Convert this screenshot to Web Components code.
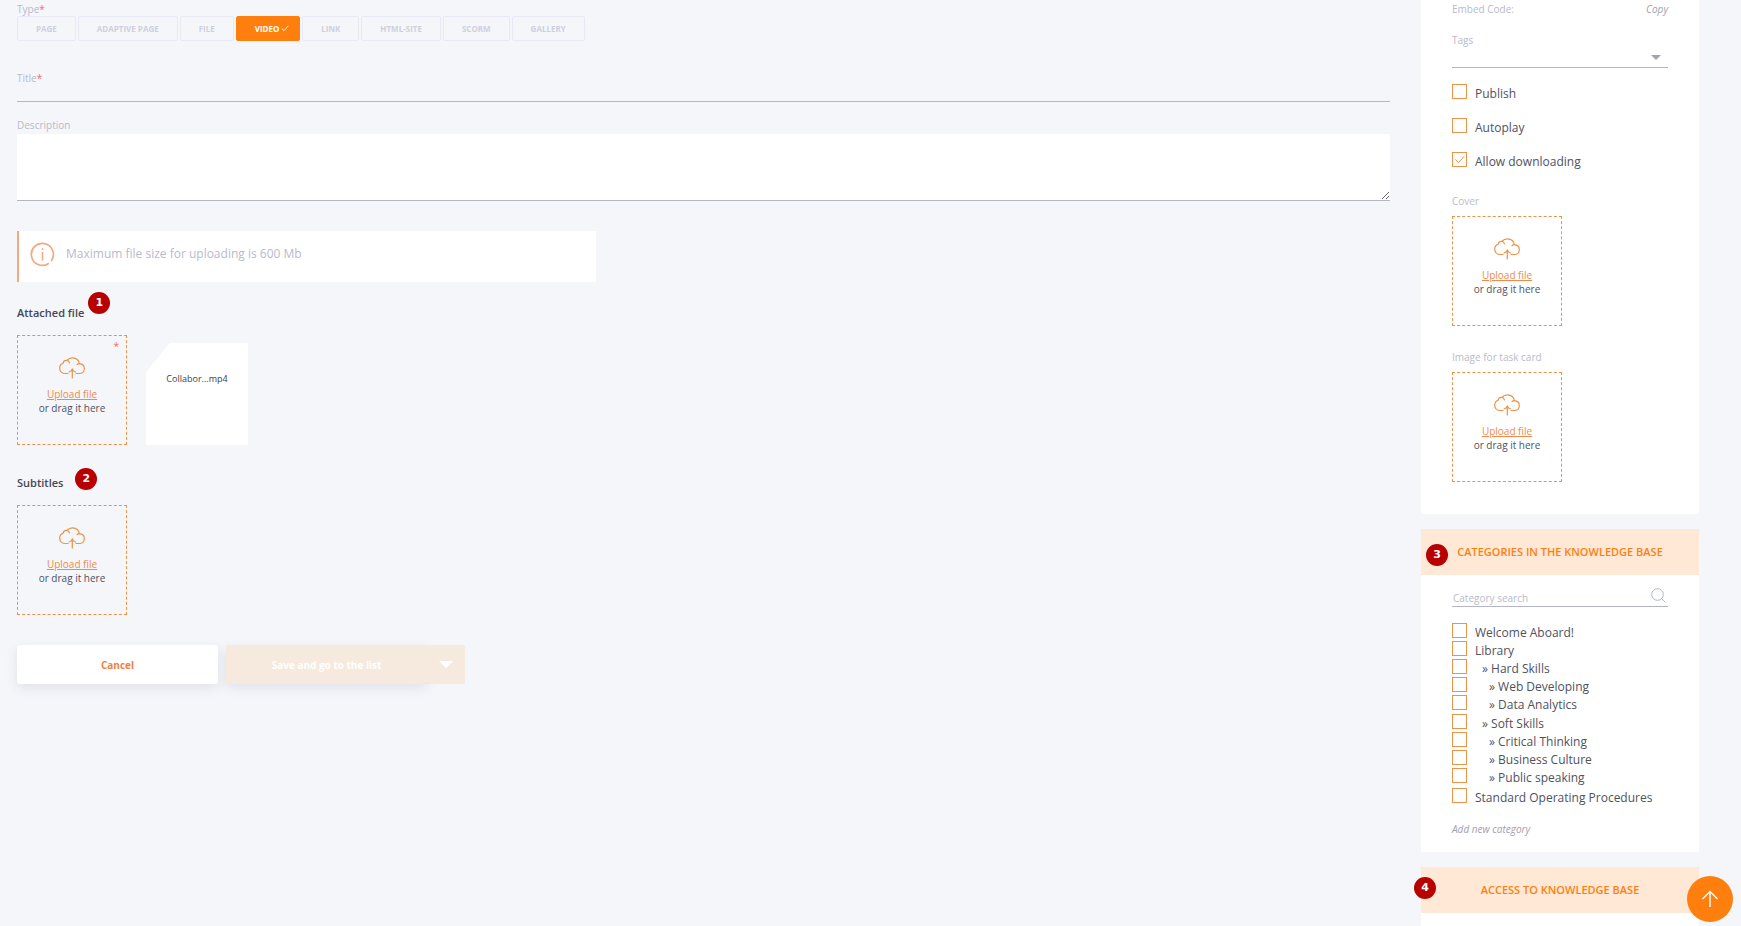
<!DOCTYPE html>
<html lang="en">
<head>
<meta charset="utf-8">
<meta name="viewport" content="width=device-width, initial-scale=1">
<title>Video material</title>
<style>
  :root {
    --bg: #f4f6fa;
    --panel: #fff;
    --accent: #ff7f0e;
    --accent-soft: #ffe8d6;
    --outline: #eb9348;
    --link: #f08a4b;
    --text: #50515e;
    --muted: #b9bacb;
    --line: #b4b6c4;
    --badge: #b80000;
  }
  body {
    margin: 0;
    background: var(--bg);
    color: var(--text);
    font-family: "Open Sans", "Noto Sans", sans-serif;
    font-size: 12px;
    line-height: 18px;
  }
</style>
</head>
<body>
<material-editor></material-editor>

<script>
const CLOUD = `
  <svg width="26" height="22" viewBox="0 0 26 22" fill="none" stroke="currentColor" stroke-width="1.2" stroke-linecap="round" stroke-linejoin="round" aria-hidden="true">
    <path d="M9 16.5H6.4C3.2 16.5.7 14.3.7 11.2.7 8.6 2.2 7 4.1 6.3 4.5 4.2 6.2 3.1 8 3.4 9.3 1.7 11.2.8 13.6.8c3.7 0 6.6 2.5 6.7 5.9 3 .2 5 2.4 5 5 0 2.9-2.2 4.8-5 4.8H17"/>
    <path d="M8 3.4c1.3.2 2.1 1.1 2.4 2.4M20.3 6.7c-.9 0-1.6.3-2.2.8"/>
    <path d="M13.3 21V11.8M10 15c1.7-.5 2.9-1.6 3.3-3.2.4 1.6 1.6 2.7 3.3 3.2"/>
  </svg>`;

function define(tag, html) {
  const template = document.createElement('template');
  template.innerHTML = html;
  customElements.define(tag, class extends HTMLElement {
    constructor() {
      super();
      this.attachShadow({ mode: 'open' }).append(template.content.cloneNode(true));
    }
    connectedCallback() {
      // every element marked data-attr shows the host attribute of that name
      this.shadowRoot.querySelectorAll('[data-attr]').forEach((el) => {
        el.textContent = this.getAttribute(el.dataset.attr) || '';
      });
      const box = this.shadowRoot.querySelector('input[type=checkbox]');
      if (box) box.checked = this.hasAttribute('checked');
    }
  });
}

define('num-badge', `
  <style>
    :host {
      display: flex;
      align-items: center;
      justify-content: center;
      width: 22px;
      height: 22px;
      border-radius: 50%;
      background: var(--badge);
      color: #fff;
      font: bold 11px/22px "DejaVu Sans", sans-serif;
    }
  </style>
  <slot></slot>
`);

define('field-label', `
  <style>
    :host { display: block; color: var(--muted); font-size: 10px; line-height: 14px; }
    i { display: none; color: #f26b6b; font-style: normal; }
    :host([required]) i { display: inline; }
  </style>
  <slot></slot><i>*</i>
`);

define('type-chip', `
  <style>
    :host { display: block; }
    button {
      display: flex;
      align-items: center;
      gap: 2px;
      height: 25px;
      padding: 0 18px;
      border: 1px solid #e8e9f4;
      border-radius: 2px;
      background: transparent;
      color: #cfd0dd;
      font: bold 8px/12px "Open Sans", sans-serif;
      text-transform: uppercase;
    }
    svg { display: none; }
    :host([selected]) button { padding-right: 10px; border-color: var(--accent); background: var(--accent); color: #fff; }
    :host([selected]) svg { display: block; }
  </style>
  <button type="button"><slot></slot>
    <svg width="8" height="7" viewBox="0 0 8 7" fill="none" stroke="#fff" aria-hidden="true"><path d="M.8 3.5 3 5.7 7.3.8"/></svg>
  </button>
`);

define('upload-box', `
  <style>
    :host { display: block; position: relative; width: 110px; }
    label {
      display: flex;
      flex-direction: column;
      align-items: center;
      box-sizing: border-box;
      height: 110px;
      padding-top: 21px;
      border: 1px dashed var(--outline);
      color: var(--text);
      font-size: 10px;
      line-height: 14px;
    }
    svg { margin-bottom: 8px; color: var(--outline); }
    u { color: var(--link); }
    input { position: absolute; width: 1px; height: 1px; opacity: 0; }
    i { display: none; position: absolute; top: 4px; right: 8px; color: #f26b6b; font-style: normal; font-size: 10px; line-height: 14px; }
    :host([required]) i { display: block; }
  </style>
  <label>${CLOUD}<u>Upload file</u><span>or drag it here</span><input type="file"></label>
  <i>*</i>
`);

define('file-card', `
  <style>
    :host {
      display: block;
      box-sizing: border-box;
      width: 102px;
      height: 102px;
      padding-top: 29px;
      background: #fff;
      clip-path: polygon(24px 0, 100% 0, 100% 100%, 0 100%, 0 29px);
      color: #3d3e49;
      font-size: 9px;
      line-height: 13px;
      text-align: center;
    }
  </style>
  <slot></slot>
`);

define('info-note', `
  <style>
    :host {
      display: flex;
      gap: 11px;
      box-sizing: border-box;
      max-width: 579px;
      height: 51px;
      padding: 11px 11px 0;
      border-left: 2px solid #f2a880;
      background: #fff;
      color: var(--muted);
      line-height: 24px;
    }
  </style>
  <svg width="25" height="25" viewBox="0 0 25 25" fill="none" stroke="#f2a880" aria-hidden="true">
    <path stroke-width="1.7" stroke-linecap="round" d="M18.2 21.7A11 11 0 1 1 21.5 18.5"/>
    <path stroke-width="1.5" d="M12.5 10v8.5M12.5 6.2v1.8"/>
  </svg>
  <slot></slot>
`);

define('check-row', `
  <style>
    :host { display: block; }
    label { display: flex; gap: 8px; line-height: 18px; }
    input {
      appearance: none;
      flex: none;
      width: 15px;
      height: 15px;
      margin: 0;
      border: 1px solid var(--outline);
      background: #fff;
    }
    input:checked {
      background: url("data:image/svg+xml,%3Csvg xmlns='http://www.w3.org/2000/svg' viewBox='0 0 13 13' fill='none' stroke='%23eb9348'%3E%3Cpath d='M2.5 6.5 5.5 9.7 11 3.5'/%3E%3C/svg%3E") center / 13px 13px no-repeat;
    }
    span { padding-top: 1px; line-height: 17px; white-space: nowrap; }
    :host([level="1"]) span { padding-left: 7px; }
    :host([level="2"]) span { padding-left: 14px; }
  </style>
  <label><input type="checkbox"><span><slot></slot></span></label>
`);

define('side-panel', `
  <style>
    :host { display: block; background: var(--panel); }
    h2 {
      margin: 0;
      background: var(--accent-soft);
      color: var(--accent);
      font-size: 11px;
      font-weight: 600;
      line-height: 46px;
      text-align: center;
      text-transform: uppercase;
    }
    h2:empty { display: none; }
    .body { padding: 0 31px; }
  </style>
  <h2 data-attr="heading"></h2>
  <div class="body"><slot></slot></div>
`);

define('category-tree', `
  <style>
    :host { display: block; }
    ul { margin: 0; padding: 0; list-style: none; }
    ul ul { padding-bottom: 1px; }
  </style>
  <ul>
    <li><check-row>Welcome Aboard!</check-row></li>
    <li><check-row>Library</check-row>
      <ul>
        <li><check-row level="1">» Hard Skills</check-row>
          <ul>
            <li><check-row level="2">» Web Developing</check-row></li>
            <li><check-row level="2">» Data Analytics</check-row></li>
          </ul>
        </li>
        <li><check-row level="1">» Soft Skills</check-row>
          <ul>
            <li><check-row level="2">» Critical Thinking</check-row></li>
            <li><check-row level="2">» Business Culture</check-row></li>
            <li><check-row level="2">» Public speaking</check-row></li>
          </ul>
        </li>
      </ul>
    </li>
    <li><check-row>Standard Operating Procedures</check-row></li>
  </ul>
`);

define('search-field', `
  <style>
    :host { display: flex; height: 22px; border-bottom: 1px solid var(--line); }
    input {
      flex: 1;
      min-width: 0;
      padding: 5px 1px 0;
      border: 0;
      outline: 0;
      background: none;
      color: var(--text);
      font: 10px/16px "Open Sans", sans-serif;
    }
    input::placeholder { color: var(--muted); opacity: 1; }
    button { padding: 0 2px 0 0; border: 0; background: none; }
    svg { display: block; }
  </style>
  <input type="text" placeholder="Category search" aria-label="Category search">
  <button type="button" aria-label="Search">
    <svg width="15" height="15" viewBox="0 0 15 15" fill="none" stroke="#b4b6c4" aria-hidden="true">
      <circle cx="6.5" cy="6.5" r="5.8"/><path d="m10.7 10.7 3.8 3.8"/>
    </svg>
  </button>
`);

define('form-actions', `
  <style>
    :host { display: flex; gap: 8px; }
    button {
      height: 39px;
      padding: 0;
      border: 0;
      border-radius: 3px;
      font: bold 10px/18px "Open Sans", sans-serif;
    }
    .cancel, .save { width: 201px; box-shadow: 0 4px 12px rgba(60, 60, 80, .1); }
    .cancel { background: #fff; color: #f0823c; }
    .split { display: flex; border-radius: 3px; background: #f6eade; }
    .save, .more { background: #f6eade; color: #fff; }
    .more { display: flex; align-items: center; justify-content: center; width: 38px; }
  </style>
  <button type="button" class="cancel">Cancel</button>
  <div class="split">
    <button type="submit" class="save">Save and go to the list</button>
    <button type="button" class="more" aria-label="More save options">
      <svg width="14" height="7" viewBox="0 0 14 7" fill="#fff" aria-hidden="true"><path d="M0 0h14L7 7z"/></svg>
    </button>
  </div>
`);

define('material-form', `
  <style>
    :host { display: block; padding: 2px 0 40px; }
    .types { display: flex; flex-wrap: wrap; gap: 2px; }
    .title { margin-top: 30px; }
    input, textarea {
      display: block;
      box-sizing: border-box;
      width: 100%;
      border: 0;
      border-bottom: 1px solid var(--line);
      border-radius: 0;
      outline: 0;
      color: var(--text);
      font: 12px/18px "Open Sans", sans-serif;
    }
    input { height: 17px; padding: 0; background: none; }
    textarea { height: 67px; margin-top: 2px; padding: 4px; background: #fff; resize: vertical; }
    .description { margin-top: 16px; }
    info-note { margin-top: 30px; }
    h3 { margin: 0; font-size: 11px; font-weight: 600; line-height: 18px; color: #464753; }
    .head { display: flex; }
    .attached { gap: 4px; margin-top: 10px; }
    .attached h3 { padding-top: 12px; }
    .subs { gap: 12px; margin-top: 23px; }
    .subs h3 { padding-top: 6px; }
    .files { display: flex; align-items: flex-end; gap: 19px; margin-top: 13px; }
    form-actions { margin-top: 30px; }
  </style>
  <field-label required>Type</field-label>
  <div class="types">
    <type-chip>Page</type-chip>
    <type-chip>Adaptive page</type-chip>
    <type-chip>File</type-chip>
    <type-chip selected>Video</type-chip>
    <type-chip>Link</type-chip>
    <type-chip>HTML-site</type-chip>
    <type-chip>SCORM</type-chip>
    <type-chip>Gallery</type-chip>
  </div>
  <label for="title"><field-label class="title" required>Title</field-label></label>
  <input id="title" type="text">
  <label for="description"><field-label class="description">Description</field-label></label>
  <textarea id="description"></textarea>
  <info-note>Maximum file size for uploading is 600 Mb</info-note>
  <div class="head attached"><h3>Attached file</h3><num-badge>1</num-badge></div>
  <div class="files">
    <upload-box required></upload-box>
    <file-card>Collabor...mp4</file-card>
  </div>
  <div class="head subs"><h3>Subtitles</h3><num-badge>2</num-badge></div>
  <div class="files"><upload-box></upload-box></div>
  <form-actions></form-actions>
`);

define('material-sidebar', `
  <style>
    :host { display: flex; flex-direction: column; gap: 15px; }
    a { color: #9fa0b0; font-size: 10px; font-style: italic; line-height: 14px; text-decoration: none; }
    .embed { display: flex; justify-content: space-between; padding-top: 2px; }
    .tags { margin-top: 17px; }
    select {
      display: block;
      width: 100%;
      height: 21px;
      border: 0;
      border-bottom: 1px solid var(--line);
      border-radius: 0;
      outline: 0;
      appearance: none;
      background: url("data:image/svg+xml,%3Csvg xmlns='http://www.w3.org/2000/svg' viewBox='0 0 10 5' fill='%23a3a4b2'%3E%3Cpath d='M0 0h10L5 5z'/%3E%3C/svg%3E") right 7px center / 10px 5px no-repeat;
    }
    .checks { display: grid; gap: 16px; margin-top: 16px; }
    .cover { margin-top: 24px; }
    .card { margin-top: 24px; }
    upload-box { margin-top: 8px; }
    .settings { padding-bottom: 32px; }
    .over { position: relative; }
    .over num-badge { position: absolute; top: 15px; left: 5px; }
    .over .edge { top: 10px; left: -7px; }
    search-field { margin-top: 9px; }
    category-tree { margin-top: 16px; }
    .add { display: block; padding: 16px 0; }
    .access { min-height: 120px; }
  </style>
  <side-panel class="settings">
    <div class="embed"><field-label>Embed Code:</field-label><a href="#">Copy</a></div>
    <label for="tags"><field-label class="tags">Tags</field-label></label>
    <select id="tags"><option></option></select>
    <div class="checks">
      <check-row>Publish</check-row>
      <check-row>Autoplay</check-row>
      <check-row checked>Allow downloading</check-row>
    </div>
    <field-label class="cover">Cover</field-label>
    <upload-box></upload-box>
    <field-label class="card">Image for task card</field-label>
    <upload-box></upload-box>
  </side-panel>
  <div class="over">
    <side-panel heading="Categories in the knowledge base">
      <search-field></search-field>
      <category-tree></category-tree>
      <a class="add" href="#">Add new category</a>
    </side-panel>
    <num-badge>3</num-badge>
  </div>
  <div class="over">
    <side-panel class="access" heading="Access to knowledge base"></side-panel>
    <num-badge class="edge">4</num-badge>
  </div>
`);

define('scroll-top', `
  <style>
    :host { display: block; position: fixed; right: 8px; bottom: 4px; }
    button {
      display: flex;
      align-items: center;
      justify-content: center;
      width: 46px;
      height: 46px;
      padding: 0;
      border: 0;
      border-radius: 50%;
      background: var(--accent);
    }
  </style>
  <button type="button" aria-label="Back to top">
    <svg width="18" height="18" viewBox="0 0 18 18" fill="none" stroke="#fff" stroke-width="1.4" aria-hidden="true">
      <path d="M9 17V1.5M1.5 9 9 1.5 16.5 9"/>
    </svg>
  </button>
`);

define('material-editor', `
  <style>
    :host {
      display: grid;
      grid-template-columns: minmax(0, 1fr) 278px;
      gap: 31px;
      box-sizing: border-box;
      height: 100vh;
      padding: 0 42px 0 17px;
      overflow: hidden;
    }
  </style>
  <material-form></material-form>
  <material-sidebar></material-sidebar>
  <scroll-top></scroll-top>
`);
</script>
</body>
</html>
